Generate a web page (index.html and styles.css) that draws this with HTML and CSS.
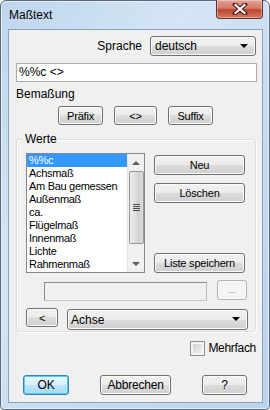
FILE: index.html
```html
<!DOCTYPE html>
<html lang="de">

<head>
    <meta charset="UTF-8">
    <title>Maßtext</title>
    <link rel="stylesheet" href="styles.css">
</head>

<body>
    <div class="window">
        <div class="titleBar">
            <div class="titleText">Maßtext</div>
            <div class="closeBtn">
                <svg width="16" height="12" viewBox="0 0 16 12">
                    <path d="M3 1.5 L13 10.5 M13 1.5 L3 10.5" stroke="#4a1a1a" stroke-width="4.2" stroke-linecap="square" />
                    <path d="M3.5 2 L12.5 10 M12.5 2 L3.5 10" stroke="#fff" stroke-width="2.2" stroke-linecap="square" />
                </svg>
            </div>
        </div>

        <div class="client">
            <div class="langRow">
                <span>Sprache</span>
                <div class="combo comboLang">deutsch<i class="arrow"></i></div>
            </div>

            <div class="edit editMain">%%c &lt;&gt;</div>

            <div class="label">Bemaßung</div>

            <div class="btnRow">
                <div class="btn btnPre">Präfix</div>
                <div class="btn btnMid">&lt;&gt;</div>
                <div class="btn btnPre">Suffix</div>
            </div>

            <div class="group">
                <span class="legend">Werte</span>

                <div class="listArea">
                    <div class="listBox">
                        <ul class="items">
                            <li class="sel">%%c</li>
                            <li>Achsmaß</li>
                            <li>Am Bau gemessen</li>
                            <li>Außenmaß</li>
                            <li>ca.</li>
                            <li>Flügelmaß</li>
                            <li>Innenmaß</li>
                            <li>Lichte</li>
                            <li>Rahmenmaß</li>
                        </ul>
                        <div class="scroll">
                            <div class="scrollUp"></div>
                            <div class="thumb"><b></b><b></b><b></b><b></b></div>
                            <div class="scrollDown"></div>
                        </div>
                    </div>
                    <div class="sideBtns">
                        <div class="btn btnSide">Neu</div>
                        <div class="btn btnSide btnDel">Löschen</div>
                        <div class="btn btnSide btnSave">Liste speichern</div>
                    </div>
                </div>

                <div class="pathRow">
                    <div class="edit editPath"></div>
                    <div class="btn btnDots">...</div>
                </div>

                <div class="pickRow">
                    <div class="btn btnBack">&lt;</div>
                    <div class="combo comboPick">Achse<i class="arrow"></i></div>
                </div>
            </div>

            <div class="checkRow">
                <span class="check"></span>
                <span>Mehrfach</span>
            </div>

            <div class="footer">
                <div class="btn btnOk">OK</div>
                <div class="btn btnCancel">Abbrechen</div>
                <div class="btn btnHelp">?</div>
            </div>
        </div>
    </div>
</body>

</html>
```

FILE: styles.css
```css
body,
div,
ul,
li {
    padding: 0;
    margin: 0;
    list-style: none;
    box-sizing: border-box;
}

body {
    width: 270px;
    height: 410px;
    overflow: hidden;
    font-family: "Liberation Sans", Arial, sans-serif;
    font-size: 11px;
    color: #000;
    background: #fff;
}

.window {
    width: 270px;
    height: 410px;
    border: 1px solid #5b6a7c;
    border-radius: 6px 6px 4px 4px;
    background: linear-gradient(125deg, #bfd6ee 0%, #d4e5f6 35%, #c8dcf1 60%, #bcd3ec 100%);
    box-shadow: inset 0 0 0 1px #e4eefa;
    display: flex;
    flex-direction: column;
}

.titleBar {
    height: 28px;
    display: flex;
    justify-content: space-between;
    align-items: flex-start;
    flex-shrink: 0;
}

.titleText {
    font-size: 12px;
    padding: 7px 0 0 8px;
    color: #000;
}

.closeBtn {
    width: 47px;
    height: 19px;
    margin: -1px 6px 0 0;
    border: 1px solid #6b2e2e;
    border-top: none;
    border-radius: 0 0 4px 4px;
    background: linear-gradient(#e0a196 0%, #d47c6c 45%, #c0432c 55%, #d47d63 100%);
    box-shadow: inset 0 0 0 1px rgba(255, 255, 255, 0.35);
    display: flex;
    justify-content: center;
    align-items: center;
}

.client {
    flex: 1;
    margin: 0 6px 6px 7px;
    border: 1px solid #8aa2bc;
    background: #f0f0f0;
    position: relative;
}

/* Sprache */
.langRow {
    display: flex;
    justify-content: flex-end;
    align-items: center;
    gap: 8px;
    height: 26px;
    padding: 6px 6px 0 0;
    font-size: 12px;
}

.combo {
    height: 20px;
    border: 1px solid #707070;
    border-radius: 3px;
    background: linear-gradient(#f2f2f2 0%, #ebebeb 50%, #dddddd 50%, #cfcfcf 100%);
    box-shadow: inset 0 0 0 1px #fafafa;
    display: flex;
    align-items: center;
    padding-left: 4px;
    position: relative;
    font-size: 12px;
}

.comboLang {
    width: 106px;
}

.arrow {
    position: absolute;
    right: 7px;
    top: 7px;
    width: 0;
    height: 0;
    border-left: 4px solid transparent;
    border-right: 4px solid transparent;
    border-top: 4px solid #000;
}

.edit {
    background: #fff;
    border: 1px solid #abadb3;
    border-top-color: #8e919a;
    border-left-color: #e2e3ea;
    border-right-color: #dbdfe6;
    border-bottom-color: #e3e9ef;
}

.editMain {
    margin: 7px 5px 0 7px;
    height: 19px;
    line-height: 15px;
    padding: 1px 0 0 2px;
    border: 1px solid #abadb3;
    font-size: 12px;
}

.label {
    margin: 5px 0 0 7px;
    height: 14px;
    line-height: 14px;
    font-size: 12px;
}

.btn {
    height: 20px;
    border: 1px solid #707070;
    border-radius: 3px;
    background: linear-gradient(#f2f2f2 0%, #ebebeb 50%, #dddddd 50%, #cfcfcf 100%);
    box-shadow: inset 0 0 0 1px #fbfbfb;
    display: flex;
    justify-content: center;
    align-items: center;
    font-size: 11px;
    letter-spacing: -0.2px;
}

.btnRow {
    display: flex;
    gap: 11px;
    margin-top: 5px;
    padding-left: 49px;
}

.btnRow .btn {
    height: 19px;
}

.btnPre {
    width: 45px;
}

.btnMid {
    width: 43px;
}

/* Werte */
.group {
    margin: 14px 0 0 7px;
    width: 240px;
    height: 193px;
    border: 1px solid #d5dfe5;
    border-radius: 3px;
    box-shadow: inset 1px 1px 0 #fff, 1px 1px 0 #fff;
    padding: 13px 0 0 9px;
    position: relative;
}

.legend {
    position: absolute;
    top: -8px;
    left: 6px;
    padding: 0 2px;
    line-height: 14px;
    background: #f0f0f0;
    font-size: 12px;
}

.listArea {
    display: flex;
    gap: 9px;
}

.listBox {
    width: 119px;
    height: 120px;
    border: 1px solid #828790;
    background: #fff;
    display: flex;
}

.items {
    flex: 1;
    font-size: 11px;
    letter-spacing: -0.3px;
}

.items li {
    height: 13px;
    line-height: 13px;
    padding-left: 2px;
    white-space: nowrap;
}

.items li.sel {
    background: #3399ff;
    color: #fff;
}

.scroll {
    width: 17px;
    background: #f0f0f0;
    border-left: 1px solid #e6e6e6;
    display: flex;
    flex-direction: column;
    align-items: center;
}

.scrollUp,
.scrollDown {
    width: 0;
    height: 0;
    border-left: 4px solid transparent;
    border-right: 4px solid transparent;
    margin: 7px 0 6px;
}

.scrollUp {
    border-bottom: 4px solid #5e5e5e;
}

.scrollDown {
    border-top: 4px solid #5e5e5e;
    margin-top: auto;
}

.thumb {
    width: 15px;
    height: 73px;
    border: 1px solid #979797;
    border-radius: 2px;
    background: linear-gradient(90deg, #ececec, #dcdcdc 50%, #cfcfcf 55%, #dadada);
    display: flex;
    flex-direction: column;
    justify-content: center;
    align-items: center;
    gap: 1px;
}

.thumb b {
    width: 7px;
    height: 1px;
    background: #4e4e4e;
}

.sideBtns {
    width: 91px;
    display: flex;
    flex-direction: column;
    padding-top: 2px;
}

.btnSide {
    width: 91px;
}

.btnDel {
    margin-top: 8px;
}

.btnSave {
    margin-top: auto;
}

.pathRow {
    display: flex;
    align-items: flex-start;
    gap: 10px;
    height: 21px;
    margin: 7px 0 0 18px;
}

.editPath {
    width: 163px;
    height: 19px;
    margin-top: 2px;
    background: #f0f0f0;
    border: 1px solid #707070;
    border-color: #8b8b8b #bcbcbc #c9c9c9 #8b8b8b;
}

.btnDots {
    width: 30px;
    height: 20px;
    border-color: #adb2b5;
    background: #f4f4f4;
    color: #838383;
    font-size: 9px;
}

.pickRow {
    display: flex;
    align-items: flex-start;
    gap: 9px;
    margin-top: 7px;
}

.btnBack {
    width: 32px;
    height: 19px;
}

.comboPick {
    width: 181px;
    height: 21px;
    margin-top: 1px;
    padding-left: 3px;
}

/* Mehrfach */
.checkRow {
    display: flex;
    justify-content: flex-end;
    align-items: center;
    gap: 3px;
    height: 14px;
    margin: 9px 6px 0 0;
    font-size: 12px;
    letter-spacing: -0.3px;
}

.check {
    width: 13px;
    height: 13px;
    border: 1px solid #8e8f8f;
    background: linear-gradient(135deg, #cbcbcb, #e6e6e6 60%, #f6f6f6);
    box-shadow: inset 0 0 0 2px #f4f4f4;
}

.footer {
    display: flex;
    margin: 20px 0 0 14px;
    gap: 31px;
}

.btnOk {
    width: 46px;
    border-color: #3c7fb1;
    background: linear-gradient(#eaf6fd 0%, #d9f0fc 50%, #bee6fd 50%, #a7d9f5 100%);
    box-shadow: inset 0 0 0 1px #48d0f5;
    font-size: 12px;
}

.btnCancel {
    width: 71px;
    font-size: 12px;
}

.btnHelp {
    width: 45px;
    font-size: 12px;
}
```
